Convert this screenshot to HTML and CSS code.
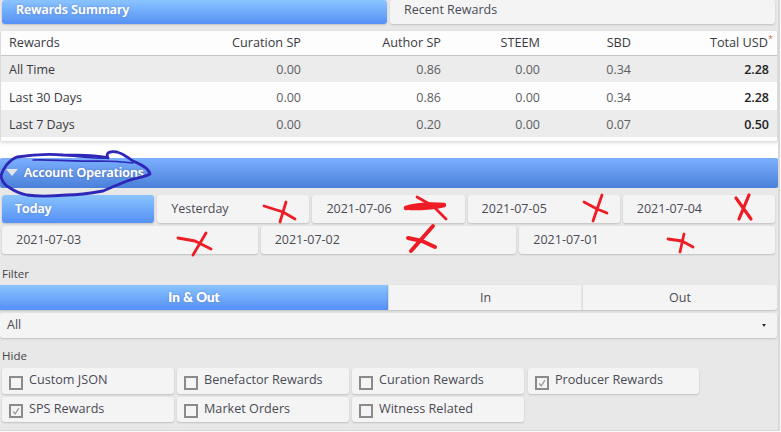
FILE: index.html
```html
<!DOCTYPE html>
<html lang="en">
<head>
<meta charset="utf-8">
<title>Rewards</title>
<link rel="stylesheet" href="styles.css">
</head>
<body>
<div class="page">
  <div class="tabs">
    <div class="btn blue tab">Rewards Summary</div>
    <div class="btn tab">Recent Rewards</div>
  </div>
  <div class="card">
    <table class="rewards">
      <thead>
        <tr><th>Rewards</th><th>Curation SP</th><th>Author SP</th><th>STEEM</th><th>SBD</th><th class="total">Total USD<sup>*</sup></th></tr>
      </thead>
      <tbody>
        <tr><td>All Time</td><td>0.00</td><td>0.86</td><td>0.00</td><td>0.34</td><td><b>2.28</b></td></tr>
        <tr><td>Last 30 Days</td><td>0.00</td><td>0.86</td><td>0.00</td><td>0.34</td><td><b>2.28</b></td></tr>
        <tr><td>Last 7 Days</td><td>0.00</td><td>0.20</td><td>0.00</td><td>0.07</td><td><b>0.50</b></td></tr>
      </tbody>
    </table>
  </div>
  <div class="spacer"></div>
  <div class="panel-head"><span class="caret"></span>Account Operations</div>
  <div class="panel">
    <div class="dates five">
      <div class="btn blue date">Today</div>
      <div class="btn date">Yesterday</div>
      <div class="btn date">2021-07-06</div>
      <div class="btn date">2021-07-05</div>
      <div class="btn date">2021-07-04</div>
    </div>
    <div class="dates three">
      <div class="btn date">2021-07-03</div>
      <div class="btn date">2021-07-02</div>
      <div class="btn date">2021-07-01</div>
    </div>
    <div class="label filter-label">Filter</div>
    <div class="segments">
      <div class="seg blue">In &amp; Out</div>
      <div class="seg">In</div>
      <div class="seg">Out</div>
    </div>
    <div class="select">All<span class="select-caret"></span></div>
    <div class="label hide-label">Hide</div>
    <div class="checks">
      <div class="btn check"><span class="box"></span>Custom JSON</div>
      <div class="btn check"><span class="box"></span>Benefactor Rewards</div>
      <div class="btn check"><span class="box"></span>Curation Rewards</div>
      <div class="btn check"><span class="box on"><svg viewBox="0 0 12 12"><path d="M2.5 6.5 5 9.5 9.5 2.5"/></svg></span>Producer Rewards</div>
      <div class="btn check"><span class="box on"><svg viewBox="0 0 12 12"><path d="M2.5 6.5 5 9.5 9.5 2.5"/></svg></span>SPS Rewards</div>
      <div class="btn check"><span class="box"></span>Market Orders</div>
      <div class="btn check"><span class="box"></span>Witness Related</div>
    </div>
  </div>
  <svg class="ink" viewBox="0 0 781 432" width="781" height="432">
    <path class="blue-ink" d="M150 174C149 168 140 164 133 161C128 158 125 154 117 152C111 151 105 152 108 158C100 156 80 155 63 155C50 154 30 155 17 157C9 160 3 168 1 176C2 182 6 186 10 188C16 192 22 194 27 195C40 197 55 196 67 195C80 195 92 193 103 191C112 187 120 184 127 181C135 178 145 177 150 174"/>
    <path class="blue-ink thin" d="M33 160C50 159 70 162 100 161C115 161 125 162 133 163"/>
    <path class="blue-ink thin" d="M63 155C80 157 95 159 108 158"/>
    <g class="red-ink">
      <path d="M264 206 283 212 295 219M286 202 280 222"/>
      <path d="M417 197 433 206 446 219"/>
      <path class="thick" d="M406 208C418 204 432 204 444 205C434 208 420 208 410 208"/>
      <path d="M584 202 597 209 607 213M602 195 593 221"/>
      <path class="mid" d="M736 198 751 219M749 195 739 219"/>
      <path d="M178 238 195 241 211 249M206 233 193 255"/>
      <path class="thick-x" d="M408 238 422 241 435 247M433 226 411 251"/>
      <path d="M668 239 682 241 693 247M684 234 680 252"/>
    </g>
  </svg>
</div>
</body>
</html>
```
FILE: styles.css
```css
* { box-sizing: border-box; }
html, body { margin: 0; padding: 0; }
body {
  width: 781px;
  height: 432px;
  overflow: hidden;
  background: #fafafa;
  font-family: "Open Sans", sans-serif;
  font-size: 12.5px;
  color: #4b4b55;
}
.page {
  position: relative;
  width: 780px;
  height: 431px;
  overflow: hidden;
  background: #e8e8e8;
  border-right: 2px solid #d8d8d8;
  border-bottom: 1px solid #d8d8d8;
}
.btn {
  background: #f4f4f4;
  border-radius: 3px;
  box-shadow: 0 1px 2px rgba(0, 0, 0, 0.18);
}
.blue {
  background: linear-gradient(#8ac4ff, #5590f5);
  color: #fff;
  font-weight: 600;
  text-shadow: 0 0 1px rgba(255, 255, 255, 0.8), 0 0 2px rgba(40, 80, 150, 0.7);
}
.tabs {
  display: grid;
  grid-template-columns: 385px 385px;
  gap: 3px;
  margin-left: 2px;
  height: 24px;
}
.tab { display: flex; align-items: center; padding: 0 0 6px 14px; }
.card {
  position: relative;
  margin: 7px 1px 0 1px;
  height: 110px;
  padding-bottom: 4px;
  background: #fdfdfd;
  box-shadow: 0 1px 3px rgba(0, 0, 0, 0.15);
}
.spacer { height: 17px; background: linear-gradient(#f6f6f6, #ffffff 40%); }
.rewards { width: 100%; border-collapse: collapse; table-layout: fixed; }
.rewards th {
  height: 24px;
  font-weight: 400;
  font-size: 12.7px;
  color: #3a3a40;
  border-bottom: 1px solid #c4c4c4;
  text-align: right;
  padding: 0 8px 2px 0;
}
.rewards .total { padding-right: 4px; }
.rewards td { height: 27px; text-align: right; padding: 2px 8px 0 0; color: #5e5e62; }
.rewards tbody tr:nth-child(odd) { background: #ececec; }
.rewards tbody tr:nth-child(2) { height: 28px; }
.rewards th:first-child, .rewards td:first-child { text-align: left; padding-left: 8px; color: #3a3a40; width: 110px; }
.rewards th:nth-child(2) { width: 198px; }
.rewards th:nth-child(3) { width: 140px; }
.rewards th:nth-child(4) { width: 99px; }
.rewards th:nth-child(5) { width: 91px; }
.rewards b { color: #222; font-weight: 600; }
.rewards sup { font-size: 9px; color: #c86a50; line-height: 0; }
.panel-head {
  height: 30px;
  display: flex;
  align-items: center;
  padding: 0 0 2px 6px;
  background: linear-gradient(#7cb0ff, #4a80d8);
  color: #fff;
  font-weight: 600;
  text-shadow: 0 0 1px rgba(255, 255, 255, 0.8), 0 0 2px rgba(30, 60, 130, 0.8);
  border-radius: 2px;
}
.caret {
  width: 0;
  height: 0;
  margin-right: 6px;
  border-left: 6px solid transparent;
  border-right: 6px solid transparent;
  border-top: 7px solid #e4e4e4;
}
.panel { padding-top: 7px; }
.dates { display: grid; gap: 3px; margin: 0 3px 3px 2px; }
.five { grid-template-columns: repeat(5, 1fr); }
.three { grid-template-columns: repeat(3, 1fr); }
.date { height: 28px; display: flex; align-items: center; padding: 0 0 2px 14px; }
.date.blue { padding-left: 13px; }
.label { font-size: 11.5px; padding-left: 2px; color: #444; height: 16px; line-height: 16px; }
.filter-label { margin-top: 12px; }
.segments { display: grid; grid-template-columns: 388px 194px 195px; margin-top: 3px; width: 777px; height: 25px; }
.seg {
  display: flex; align-items: center; justify-content: center;
  background: #f4f4f4;
  box-shadow: 0 1px 2px rgba(0, 0, 0, 0.18);
  border-left: 1px solid #ddd;
}
.seg:last-child { border-radius: 0 3px 3px 0; }
.seg.blue { border: 0; padding-bottom: 2px; background: linear-gradient(#8ac4ff, #5590f5); font-family: "Lato", sans-serif; font-weight: 700; font-size: 13.5px; }
.select {
  position: relative;
  width: 777px;
  height: 25px;
  margin-top: 3px;
  padding: 0 0 2px 7px;
  display: flex;
  align-items: center;
  background: #f4f4f4;
  border-radius: 3px;
  box-shadow: 0 1px 2px rgba(0, 0, 0, 0.18);
}
.select-caret {
  position: absolute;
  right: 11px;
  top: 11px;
  border-left: 2px solid transparent;
  border-right: 2px solid transparent;
  border-top: 3px solid #333;
}
.hide-label { margin-top: 10px; }
.checks {
  display: grid;
  grid-template-columns: repeat(4, 172px);
  column-gap: 3px;
  row-gap: 3px;
  margin: 4px 0 0 2px;
  font-size: 12.65px;
}
.check { height: 26px; display: flex; align-items: center; padding: 0 0 4px 7px; gap: 6px; }
.check:nth-child(n+5) { height: 25px; }
.check:nth-child(4) { margin-left: 1px; }
.box {
  width: 14px;
  height: 14px;
  margin-top: 7px;
  border: 2px solid #8a8a8a;
  background: #f4f4f4;
  flex: none;
}
.box svg { display: block; width: 10px; height: 10px; }
.box path { fill: none; stroke: #999; stroke-width: 1.5; }
.ink { position: absolute; left: 0; top: 0; pointer-events: none; }
.blue-ink { fill: none; stroke: #2f27b8; stroke-width: 2.8; stroke-linecap: round; stroke-linejoin: round; }
.blue-ink.thin { stroke-width: 1.6; }
.red-ink path { fill: none; stroke: #ee1c25; stroke-width: 2.8; stroke-linecap: round; stroke-linejoin: round; }
.red-ink .mid { stroke-width: 3.2; }
.red-ink .thick { stroke-width: 4.5; }
.red-ink .thick-x { stroke-width: 4; }
```
